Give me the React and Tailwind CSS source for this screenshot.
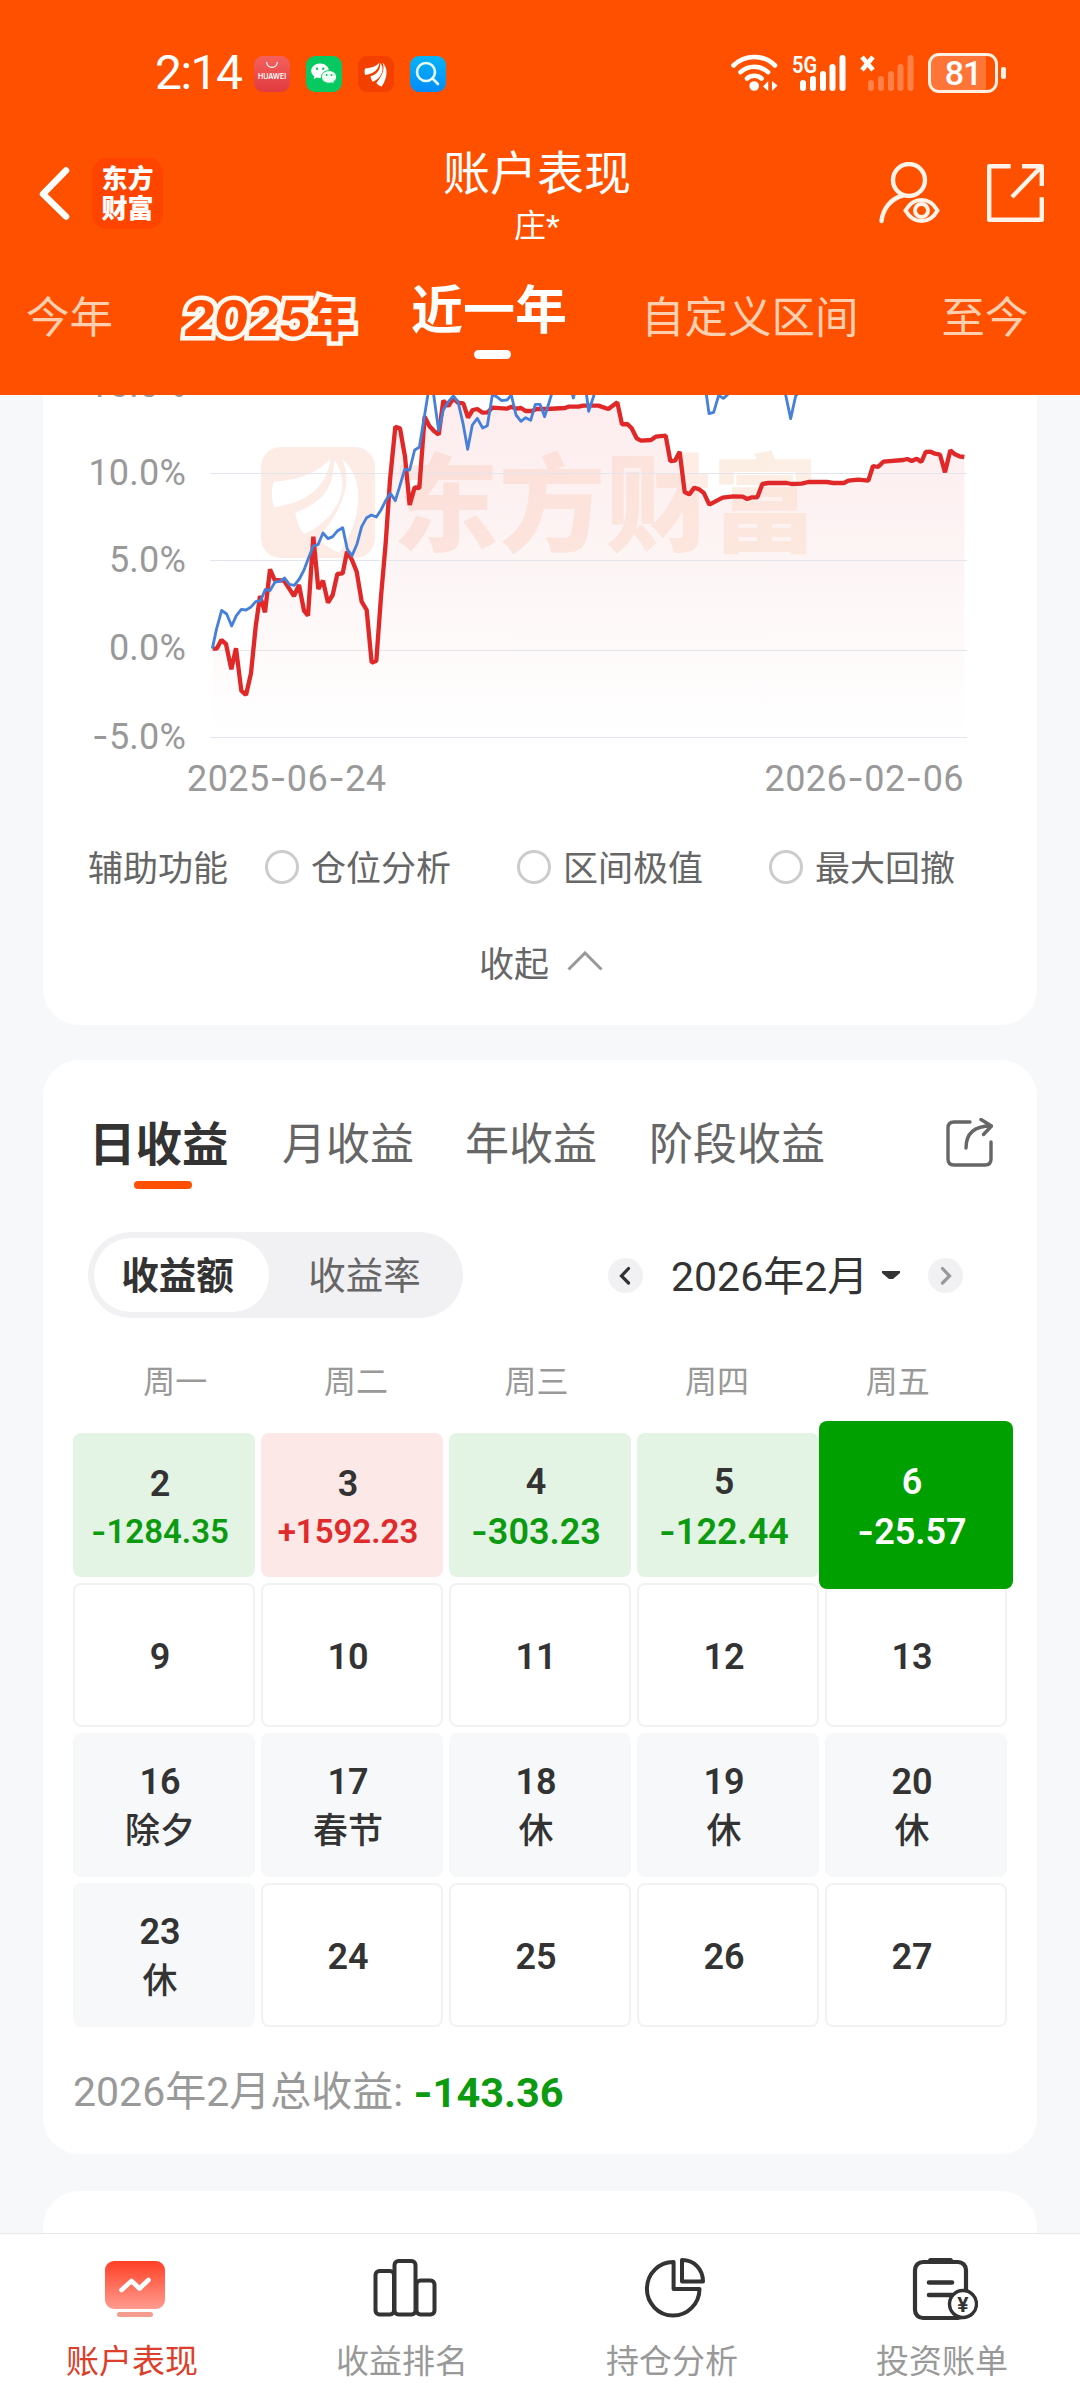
import React from "react";

const RED_LINE =
  "458,806 470,806 484,780 498,792 514,868 528,805 544,932 558,945 573,880 587,740 600,648 615,697 630,568 644,600 672,602 702,648 717,615 732,692 744,707 760,470 775,627 789,602 804,668 818,645 832,582 848,580 861,515 876,540 890,575 905,665 920,690 935,848 949,842 963,650 977,490 990,300 1006,140 1020,145 1035,230 1049,375 1064,322 1078,324 1094,110 1108,138 1122,153 1136,164 1150,62 1165,78 1180,55 1194,68 1210,70 1224,113 1238,90 1252,87 1268,98 1283,97 1297,83 1340,86 1355,80 1368,86 1383,84 1397,93 1415,93 1430,87 1460,87 1515,84 1525,80 1555,80 1570,77 1615,77 1645,87 1672,67 1686,133 1702,132 1715,145 1730,175 1743,182 1773,180 1787,170 1817,167 1831,243 1845,242 1859,215 1874,336 1888,343 1903,323 1917,328 1931,338 1948,374 1988,353 2020,349 2048,350 2062,357 2076,352 2092,352 2107,312 2125,309 2180,309 2195,312 2225,311 2245,306 2300,306 2320,309 2352,309 2365,302 2395,299 2425,302 2439,258 2454,261 2470,245 2530,240 2542,237 2555,243 2570,236 2584,246 2597,216 2612,215 2625,221 2640,224 2655,277 2671,211 2685,223 2698,229 2713,231";

const BLUE_LINE =
  "457,806 470,745 485,691 500,702 515,738 529,707 544,688 558,690 572,682 587,665 602,662 616,628 630,632 645,606 660,604 674,594 688,613 703,616 718,597 732,570 747,530 760,498 774,494 789,459 804,476 818,470 833,452 848,443 862,508 876,527 891,492 905,440 920,413 934,405 949,411 963,390 977,362 991,340 1006,362 1020,316 1034,268 1049,270 1064,210 1078,202 1093,110 1106,30 1119,30 1136,152 1150,90 1165,65 1180,48 1194,65 1209,130 1223,208 1237,135 1252,115 1268,144 1282,137 1297,45 1310,50 1325,62 1341,60 1354,45 1368,105 1383,124 1397,113 1412,121 1426,73 1440,73 1454,110 1470,58 1482,20 1525,0 1540,54 1552,10 1574,0 1586,94 1602,45 1615,-60 1925,-60 1947,101 1961,97 1976,46 1990,55 2002,45 2020,-60 2160,-60 2177,45 2192,116 2207,48 2222,30";

const Num = ({ children, className = "" }) => (
  <span className={className}>
    {String(children)
      .split(/(-)/)
      .map((part, i) =>
        part === "-" ? (
          <span key={i} className="font-['Inter']">
            -
          </span>
        ) : (
          part
        )
      )}
  </span>
);

const Swoosh = () => (
  <g>
    <path d="M812 235C770 285 700 302 642 305C632 330 636 360 642 382C730 370 800 330 812 235Z" />
    <path d="M822 240C822 330 780 370 706 398C710 425 720 448 732 462C790 440 860 370 845 290C840 265 830 250 822 240Z" />
    <path d="M845 235C875 300 860 370 775 475C790 495 815 510 838 518C905 420 920 300 845 235Z" />
  </g>
);

const SignalBars = () => (
  <>
    <rect x="8" y="25" width="6" height="11" rx="3" />
    <rect x="18" y="21" width="6" height="15" rx="3" />
    <rect x="28" y="16" width="6" height="20" rx="3" />
    <rect x="37.500" y="9" width="6" height="27" rx="3" />
    <rect x="47.500" y="0" width="6" height="36" rx="3" />
  </>
);

function StatusBar() {
  return (
    <div className="flex h-[146px] items-center pl-[155px] pr-[74px]">
      <span className="w-[99px] text-[48px] leading-[48px] tracking-[-1.5px]">2:14</span>
      <div className="flex gap-4 pt-0.5">
        <div className="flex h-9 w-9 flex-col items-center rounded-[9px] bg-linear-to-b from-[#f4605c] to-[#e23a40]">
          <svg className="mt-[6px]" width="12" height="7" viewBox="0 0 12 7" fill="none" stroke="white" strokeWidth="1.200">
            <path d="M.6 0a5.400 5.400 0 0 0 10.800 0" />
          </svg>
          <span className="mt-[3px] font-['Inter'] text-[7px] font-semibold leading-[9px]">HUAWEI</span>
        </div>
        <svg width="36" height="36" viewBox="0 0 36 36">
          <rect width="36" height="36" rx="9" fill="#07c960" />
          <path d="M14 7.500c-5 0-8.800 3.300-8.800 7.300 0 2.300 1.200 4.300 3.200 5.700l-.8 2.700 3.100-1.600c1 .3 2.100.5 3.300.5 5 0 8.900-3.300 8.900-7.300S19 7.500 14 7.500Z" fill="#fff" />
          <path d="M23 14.600c-4.300 0-7.600 2.900-7.600 6.300 0 3.500 3.300 6.300 7.600 6.300 1 0 1.900-.1 2.700-.4l2.600 1.400-.6-2.400c1.800-1.200 2.900-2.900 2.900-4.900 0-3.400-3.400-6.300-7.600-6.300Z" fill="#f0fff4" stroke="#07c960" />
          <g fill="#07c960">
            <circle cx="11" cy="12.700" r="1.200" />
            <circle cx="17.200" cy="12.700" r="1.200" />
            <circle cx="20.600" cy="18.900" r="1" />
            <circle cx="25.600" cy="18.900" r="1" />
          </g>
        </svg>
        <svg width="36" height="36" viewBox="0 0 36 36">
          <rect width="36" height="36" rx="9" fill="#f33f00" />
          <g fill="white" transform="translate(-47.500 -13.500) scale(.085)">
            <Swoosh />
          </g>
        </svg>
        <svg width="36" height="36" viewBox="0 0 36 36">
          <defs>
            <linearGradient id="search" x2="0" y2="1">
              <stop stopColor="#08b4f6" />
              <stop offset="1" stopColor="#048bf7" />
            </linearGradient>
          </defs>
          <rect width="36" height="36" rx="9" fill="url(#search)" />
          <g fill="none" stroke="#e8fbff" strokeWidth="2.600" strokeLinecap="round">
            <circle cx="16" cy="16" r="9" />
            <path d="m22.500 22.500 5.500 5.500" />
          </g>
        </svg>
      </div>
      <div className="ml-auto flex items-center">
        <svg className="mr-[14px]" width="47" height="38" viewBox="0 0 47 38" fill="none" stroke="white" strokeWidth="4.600" strokeLinecap="round">
          <path d="M2.500 11.500a29.500 29.500 0 0 1 41.500 0" />
          <path d="M9.500 18.200a20 20 0 0 1 27.500 0" />
          <path d="M16 24.500a11 11 0 0 1 14.500 0" />
          <circle cx="23.200" cy="32" r="4.800" fill="white" stroke="none" />
          <path d="M32 32.500 37.200 27v10ZM46.500 31.500 41 27v10Z" fill="white" stroke="none" />
        </svg>
        <svg className="mr-[14px] overflow-visible" width="54" height="38" viewBox="0 -1 54 38" fill="white">
          <text x="0" y="17.500" fontSize="24" fontWeight="600" textLength="25" lengthAdjust="spacingAndGlyphs" fontFamily="Roboto, sans-serif">
            5G
          </text>
          <SignalBars />
        </svg>
        <svg className="mr-[14px]" width="54" height="38" viewBox="0 -1 54 38">
          <g fill="#ff8147">
            <SignalBars />
          </g>
          <path d="m2 2 11 13M13 2 2 15" stroke="white" strokeWidth="4.600" />
        </svg>
        <div className="flex h-[40px] w-[70px] items-center justify-center rounded-[11px] border-[3px] border-[#fff0e4] bg-linear-to-r from-[#ff7537] from-86% to-[#ff5000] to-86%">
          <span className="text-[34px] font-medium leading-[34px] tracking-[-1px]">81</span>
        </div>
        <div className="ml-[3px] h-3 w-[5px] rounded-[2px] bg-[#fff0e4]" />
      </div>
    </div>
  );
}

function TitleBar() {
  return (
    <div className="flex h-[104px] items-start pl-[38px] pr-[35px]">
      <svg className="mt-[21px]" width="32" height="54" viewBox="0 0 32 54" fill="none" stroke="white" strokeWidth="6.500" strokeLinecap="round" strokeLinejoin="round">
        <path d="M28 3.500 5 27l23 22.500" />
      </svg>
      <div className="ml-[22px] mt-[12px] flex h-[71px] w-[71px] flex-col items-center justify-center rounded-[15px] bg-[#ff4400] text-[26px] font-black leading-[30px]">
        <span>东方</span>
        <span>财富</span>
      </div>
      <div className="flex flex-1 flex-col items-center">
        <h1 className="mt-[-2px] pl-[33px] text-[47px] leading-[60px]">账户表现</h1>
        <p className="mt-[2px] pl-[33px] text-[32px] leading-[40px]">庄*</p>
      </div>
      <svg className="mt-[16px]" width="64" height="62" viewBox="878 162 64 62" fill="none" stroke="#fff3ea" strokeWidth="4.400" strokeLinecap="round">
        <circle cx="909" cy="180" r="16" />
        <path d="M903 195.500c-12 3-20 13-21.500 25.500" />
        <path d="M905.500 210.500c4-7 9-10.500 16-10.500s12 3.500 16 10.500c-4 7-9 10.500-16 10.500s-12-3.500-16-10.500Z" strokeWidth="4" />
        <circle cx="921.500" cy="210.500" r="6.500" strokeWidth="4" />
      </svg>
      <svg className="ml-[44px] mt-[17px]" width="59" height="60" viewBox="986 163 59 60" fill="none" stroke="#fff3ea" strokeWidth="4.400">
        <path d="M1010.700 166.200H989.200v53.600h52.600v-22.500M1022 166.200h19.800V186M1012 197l29-30" strokeLinejoin="round" />
      </svg>
    </div>
  );
}

function RangeTabs() {
  return (
    <div className="flex h-[145px] items-start text-[43.500px] leading-[60px] text-[#ffcfb0]">
      <span className="ml-[26px] mt-[39px]">今年</span>
      <span className="ml-[71px] mt-[39px] w-[178px] whitespace-nowrap font-['Inter'] text-[49px] font-extrabold tracking-[-0.500px] text-[#ff4a00] [-webkit-text-stroke:9px_#fff8f0] [paint-order:stroke_fill] [stroke-linejoin:round]">
        <span className="inline-block -skew-x-6 leading-[60px]">2025</span>
        <span className="ml-[-1px] font-['Noto_Sans_CJK_SC'] text-[46px] font-black leading-[50px]">年</span>
      </span>
      <div className="ml-[49px] mt-[32px] flex flex-col items-center">
        <span className="text-[52px] font-bold text-white">近一年</span>
        <span className="ml-[6px] mt-[8px] h-[9px] w-[37px] rounded-full bg-white" />
      </div>
      <span className="ml-[74px] mt-[39px]">自定义区间</span>
      <span className="ml-[83px] mt-[39px]">至今</span>
    </div>
  );
}

function Chart() {
  return (
    <div className="mt-[-54px] flex">
      <div className="w-[143px] text-right text-[36px] leading-[88px] tracking-[0.2px] text-[#999]">
        {["15.0%", "10.0%", "5.0%", "0.0%", "-5.0%"].map((t) => (
          <div key={t} className="h-[87.700px]">
            <Num>{t}</Num>
          </div>
        ))}
      </div>
      <svg className="ml-6 mt-[54px] overflow-visible" width="757" height="345" viewBox="450 45 2271 1035">
        <defs>
          <linearGradient id="area" gradientUnits="userSpaceOnUse" x1="0" y1="50" x2="0" y2="1072">
            <stop stopColor="#fdecee" />
            <stop offset=".5" stopColor="#fdf5f5" />
            <stop offset="1" stopColor="#ffffff" />
          </linearGradient>
          <linearGradient id="mark" gradientUnits="userSpaceOnUse" x1="1000" y1="0" x2="2260" y2="0">
            <stop stopColor="#fbc4b4" />
            <stop offset="1" stopColor="#fcd4b8" />
          </linearGradient>
        </defs>
        <polygon points={`458,1072 ${RED_LINE} 2713,1072`} fill="url(#area)" />
        <g opacity=".36">
          <rect x="603" y="201" width="342" height="333" rx="60" fill="#fbcab8" />
          <text x="998" y="488" fontSize="318" fontWeight="900" textLength="1276" fill="url(#mark)" fontFamily="'Noto Sans CJK SC', sans-serif">
            东方财富
          </text>
        </g>
        <g fill="white">
          <Swoosh />
        </g>
        <path d="M450 280.500H2721M450 541.500H2721M450 811.500H2721M450 1072.500H2721" stroke="#e3e5ec" strokeWidth="3" />
        <polyline points={RED_LINE} fill="none" stroke="#e02828" strokeWidth="13" strokeLinejoin="bevel" />
        <polyline points={BLUE_LINE} fill="none" stroke="#4680d8" strokeWidth="8.500" strokeLinejoin="round" />
      </svg>
    </div>
  );
}

function ChartCard() {
  return (
    <section className="flow-root h-[630px] rounded-b-[36px] bg-white">
      <Chart />
      <div className="-mt-[26px] flex h-[50px] justify-between pl-[144px] pr-[73px] text-[36px] leading-[50px] tracking-[0.450px] text-[#999]">
        <Num>2025-06-24</Num>
        <Num>2026-02-06</Num>
      </div>
      <div className="mt-[39px] flex h-[50px] items-center pl-[45px] text-[35px] leading-[50px] text-[#666]">
        <span className="w-[177px] pt-[5px]">辅助功能</span>
        {["仓位分析", "区间极值", "最大回撤"].map((t) => (
          <span key={t} className="flex w-[252px] shrink-0 items-center">
            <span className="mr-[12px] h-[34px] w-[34px] rounded-full border-[3px] border-[#ccc]" />
            <span className="pt-[5px]">{t}</span>
          </span>
        ))}
      </div>
      <div className="mt-[46px] flex h-[50px] items-center pl-[436px] text-[35px] leading-[50px] text-[#666]">
        <span className="pt-[5px]">收起</span>
        <svg className="-mt-1 ml-[18px]" width="36" height="20" viewBox="0 0 36 20" fill="none" stroke="#999" strokeWidth="3">
          <path d="M1.500 18.500 18 2l16.500 16.500" />
        </svg>
      </div>
    </section>
  );
}

const CELLS = [
  { d: 2, v: "-1284.35", k: "down", small: true },
  { d: 3, v: "+1592.23", k: "up", small: true },
  { d: 4, v: "-303.23", k: "down" },
  { d: 5, v: "-122.44", k: "down" },
  { d: 6, v: "-25.57", k: "active" },
  { d: 9 },
  { d: 10 },
  { d: 11 },
  { d: 12 },
  { d: 13 },
  { d: 16, v: "除夕", k: "off" },
  { d: 17, v: "春节", k: "off" },
  { d: 18, v: "休", k: "off" },
  { d: 19, v: "休", k: "off" },
  { d: 20, v: "休", k: "off" },
  { d: 23, v: "休", k: "off" },
  { d: 24 },
  { d: 25 },
  { d: 26 },
  { d: 27 },
];

const CELL_BG = {
  down: "bg-[#e3f4e4] text-[#333] pt-[4px]",
  up: "bg-[#fde8e8] text-[#333] pt-[4px]",
  active: "-mx-[6px] -my-[12px] bg-[#00a000] text-white z-10 pt-[4px]",
  off: "bg-[#f7f8fa] text-[#333] pt-[4px]",
  plain: "border-2 border-[#f2f2f3] text-[#333] pt-[5px]",
};
const VALUE_COLOR = {
  down: "text-[#0c9b10]",
  up: "text-[#df2b2b]",
  active: "text-white",
  off: "text-[35px] font-medium",
};

function DayCell({ d, v, k = "plain", small }) {
  return (
    <div className={`flex flex-col items-center justify-center rounded-[8px] pr-2 text-[36px] font-semibold leading-[49px] ${CELL_BG[k]}`}>
      <span className={small ? "translate-y-[2px]" : ""}>{d}</span>
      {v && <Num className={`whitespace-nowrap ${VALUE_COLOR[k]} ${small ? "text-[33px]" : ""}`}>{v}</Num>}
    </div>
  );
}

function EarningsCard() {
  return (
    <section className="mt-[35px] h-[1094px] rounded-[36px] bg-white pt-[55px]">
      <div className="flex h-[75px] items-start pl-[46px] text-[44px] leading-[60px] text-[#666]">
        <div className="flex flex-col items-center">
          <span className="w-[141px] text-[46.500px] font-bold text-[#333]">日收益</span>
          <span className="ml-[7px] mt-[6px] h-2 w-[58px] rounded-[4px] bg-[#ff5000]" />
        </div>
        <span className="ml-[52px]">月收益</span>
        <span className="ml-[51px]">年收益</span>
        <span className="ml-[52px]">阶段收益</span>
        <svg className="ml-[120px] mt-[3px]" width="48" height="50" viewBox="944 1118 48 50" fill="none" stroke="#666" strokeWidth="3.400" strokeLinecap="round" strokeLinejoin="round">
          <path d="M969 1122h-16q-6 0-6 6v31q0 6 6 6h31q6 0 6-6v-17" />
          <path d="M965 1148c0-14 8-22 25-22M980 1119.500l10.500 6.500-8 8.500" />
        </svg>
      </div>

      <div className="mt-[42px] flex h-[86px] items-center pl-[45px]">
        <div className="flex h-[86px] w-[375px] items-center rounded-full bg-[#f1f1f4] p-[6px] text-[37.500px]">
          <span className="flex h-[74px] w-[175px] items-center justify-center rounded-full bg-white pr-[8px] pt-[2px] font-bold text-[#333]">收益额</span>
          <span className="flex flex-1 items-center justify-center pl-3 pr-[9px] pt-[2px] text-[#666]">收益率</span>
        </div>
        <svg className="ml-[145px]" width="35" height="35" viewBox="0 0 35 35">
          <circle cx="17.500" cy="17.500" r="17.500" fill="#f1f1f4" />
          <path d="m20.500 10.500-7 7.500 7 7" fill="none" stroke="#333" strokeWidth="3.200" strokeLinecap="round" />
        </svg>
        <span className="ml-[28px] w-[193px] whitespace-nowrap pt-[5px] text-[41px] text-[#333]">2026年2月</span>
        <svg className="ml-[17px]" width="20" height="9" viewBox="0 0 20 9">
          <path d="M1 0h18v2l-7 6H8L1 2Z" fill="#333" />
        </svg>
        <svg className="ml-[27px]" width="35" height="35" viewBox="0 0 35 35">
          <circle cx="17.500" cy="17.500" r="17.500" fill="#f1f1f4" />
          <path d="m14.500 10.500 7 7.500-7 7" fill="none" stroke="#999" strokeWidth="3.200" strokeLinecap="round" />
        </svg>
      </div>

      <div className="ml-[42px] mt-[39px] grid h-[50px] w-[903px] grid-cols-5 text-center text-[32px] leading-[50px] text-[#999]">
        {["周一", "周二", "周三", "周四", "周五"].map((t) => (
          <span key={t}>{t}</span>
        ))}
      </div>

      <div className="mx-[30px] mt-[26px] grid auto-rows-[144px] grid-cols-5 gap-[6px]">
        {CELLS.map((c) => (
          <DayCell key={c.d} {...c} />
        ))}
      </div>

      <div className="mt-[35px] flex h-[60px] items-center pl-[30px] text-[41px] leading-[60px] text-[#999]">
        2026年2月总收益:
        <Num className="ml-[10px] text-[41.500px] font-bold text-[#0c9b10]">-143.36</Num>
      </div>
    </section>
  );
}

function BottomNav() {
  const items = [
    {
      label: "账户表现",
      icon: (
        <svg width="66" height="70" viewBox="102 2254 66 70">
          <defs>
            <linearGradient id="screen" x2="0" y2="1">
              <stop stopColor="#ff4025" />
              <stop offset="1" stopColor="#ff9c90" />
            </linearGradient>
          </defs>
          <rect x="105" y="2261" width="60" height="48" rx="9" fill="url(#screen)" />
          <rect x="117" y="2312" width="36" height="5" rx="2.500" fill="#f59c8e" />
          <path d="m121.500 2290 10-9 8 7.500 9-8.500" fill="none" stroke="white" strokeWidth="4.600" strokeLinecap="round" strokeLinejoin="round" />
        </svg>
      ),
    },
    {
      label: "收益排名",
      icon: (
        <svg width="66" height="70" viewBox="372 2254 66 70" fill="none" stroke="#333" strokeWidth="4">
          <rect x="375.500" y="2271" width="18.500" height="43.500" rx="4" />
          <rect x="394.500" y="2261" width="21" height="53.500" rx="4" />
          <rect x="416.500" y="2280.500" width="18" height="34" rx="4" />
        </svg>
      ),
    },
    {
      label: "持仓分析",
      icon: (
        <svg width="66" height="70" viewBox="642 2254 66 70" fill="none" stroke="#333" strokeWidth="4" strokeLinejoin="round">
          <path d="M673.600 2262v27H699.500A26.300 26.800 0 1 1 673.600 2262Z" />
          <path d="M682 2260v21.500h21C703 2269 694 2260 682 2260Z" />
        </svg>
      ),
    },
    {
      label: "投资账单",
      icon: (
        <svg width="66" height="70" viewBox="912 2254 66 70" fill="none" stroke="#333" strokeWidth="4.200" strokeLinecap="round">
          <rect x="915" y="2262" width="51" height="56" rx="8" />
          <path d="M930.500 2260.500h20" strokeWidth="5" />
          <path d="M929 2282.500h23M929 2295h23" strokeWidth="4.600" />
          <circle cx="963" cy="2304" r="13.500" fill="white" strokeWidth="3.400" />
          <text x="963" y="2311.500" textAnchor="middle" fontSize="21" fontWeight="700" fill="#333" stroke="none" fontFamily="Roboto, sans-serif">
            ¥
          </text>
        </svg>
      ),
    },
  ];
  return (
    <nav className="grid h-[167px] shrink-0 grid-cols-4 border-t border-[#e8e8e8] bg-white pt-5">
      {items.map((it, i) => (
        <div key={it.label} className="flex flex-col items-center">
          {it.icon}
          <span className={`mt-[13px] pr-[6px] text-[33px] leading-[50px] ${i === 0 ? "text-[#dc3f2b]" : "text-[#999]"}`}>{it.label}</span>
        </div>
      ))}
    </nav>
  );
}

export default function App() {
  return (
    <div className="flex h-[2400px] w-[1080px] flex-col overflow-hidden bg-[#f6f8fa] font-['Roboto','Noto_Sans_CJK_SC',sans-serif]">
      <header className="h-[395px] shrink-0 bg-[#ff5000] text-white">
        <StatusBar />
        <TitleBar />
        <RangeTabs />
      </header>
      <main className="min-h-0 flex-1 overflow-hidden px-[43px]">
        <ChartCard />
        <EarningsCard />
        <section className="mt-[37px] h-[120px] rounded-[36px] bg-white" />
      </main>
      <BottomNav />
    </div>
  );
}
